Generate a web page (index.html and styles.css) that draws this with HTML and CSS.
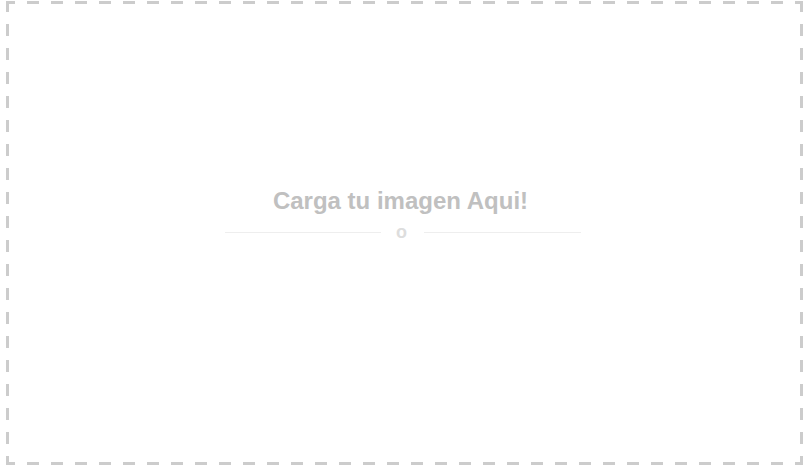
FILE: index.html
```html
<!DOCTYPE html>
<html lang="es">
<head>
<meta charset="utf-8">
<title>Carga tu imagen</title>
<link rel="stylesheet" href="styles.css">
</head>
<body>
<div class="dropzone">
  <h2 class="dz-title">Carga tu imagen Aqui!</h2>
  <div class="dz-sep">
    <span class="dz-line"></span>
    <span class="dz-or">o</span>
    <span class="dz-line dz-line-right"></span>
  </div>
</div>
</body>
</html>
```

FILE: styles.css
```css
html, body {
  margin: 0;
  padding: 0;
  background: #fff;
}
body {
  font-family: "Liberation Sans", Arial, sans-serif;
}
.dropzone {
  box-sizing: border-box;
  margin: 1px 4px 0 6px;
  height: 464px;
  padding: 186px 3px 3px 3px;
  background-image:
    linear-gradient(to right, #cccccc 12px, transparent 12px),
    linear-gradient(to right, #cccccc 12px, transparent 12px),
    linear-gradient(to bottom, #cccccc 12px, transparent 12px),
    linear-gradient(to bottom, #cccccc 12px, transparent 12px);
  background-size: 24px 3px, 24px 3px, 3px 24px, 3px 24px;
  background-repeat: repeat-x, repeat-x, repeat-y, repeat-y;
  background-position: -3px top, -3px bottom, left -1px, right -1px;
  display: flex;
  flex-direction: column;
  align-items: center;
}
.dz-title {
  margin: 0 8px 0 0;
  font-size: 24px;
  line-height: 28px;
  font-weight: bold;
  color: #c0c0c0;
}
.dz-sep {
  margin: 9px 3px 0 0;
  width: 356px;
  display: flex;
  align-items: center;
}
.dz-line {
  width: 156px;
  height: 1px;
  background: #eeeeee;
}
.dz-line-right {
  width: 157px;
}
.dz-or {
  font-size: 18px;
  line-height: 16px;
  font-weight: bold;
  color: #dddddd;
  margin: 0 17px 0 15px;
}
```
